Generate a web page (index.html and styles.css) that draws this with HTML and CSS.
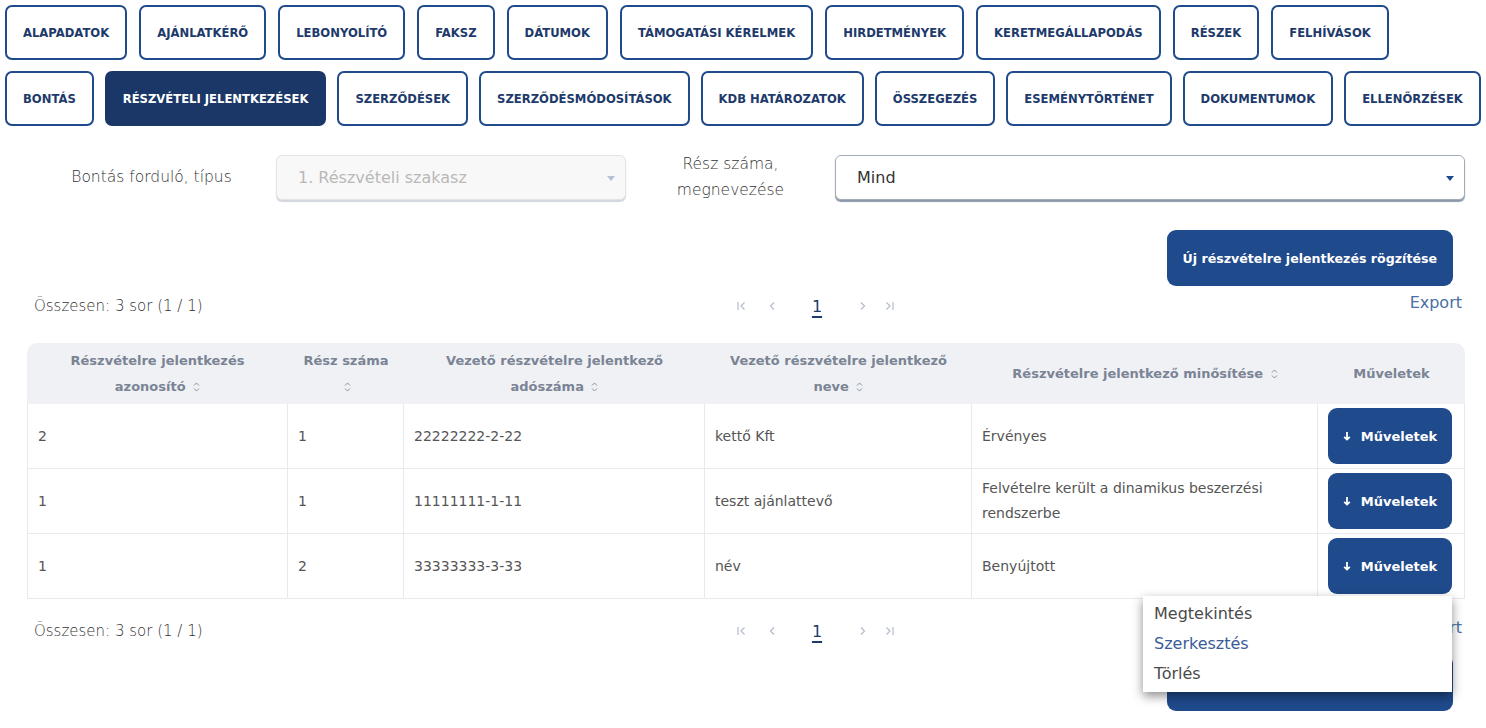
FILE: index.html
```html
<!DOCTYPE html>
<html lang="hu">
<head>
  <meta charset="UTF-8">
  <meta name="viewport" content="width=device-width, initial-scale=1.0">
  <title>Részvételi jelentkezések</title>
  <link rel="stylesheet" href="styles.css">
</head>
<body>
  <nav class="tabs">
    <div class="tab-row">
      <a class="tab" href="#">Alapadatok</a>
      <a class="tab" href="#">Ajánlatkérő</a>
      <a class="tab" href="#">Lebonyolító</a>
      <a class="tab" href="#">Faksz</a>
      <a class="tab" href="#">Dátumok</a>
      <a class="tab" href="#">Támogatási kérelmek</a>
      <a class="tab" href="#">Hirdetmények</a>
      <a class="tab" href="#">Keretmegállapodás</a>
      <a class="tab" href="#">Részek</a>
      <a class="tab" href="#">Felhívások</a>
    </div>
    <div class="tab-row tight">
      <a class="tab" href="#">Bontás</a>
      <a class="tab active" href="#">Részvételi jelentkezések</a>
      <a class="tab" href="#">Szerződések</a>
      <a class="tab" href="#">Szerződésmódosítások</a>
      <a class="tab" href="#">KDB határozatok</a>
      <a class="tab" href="#">Összegezés</a>
      <a class="tab" href="#">Eseménytörténet</a>
      <a class="tab" href="#">Dokumentumok</a>
      <a class="tab" href="#">Ellenőrzések</a>
    </div>
  </nav>

  <main class="content">
    <div class="filters">
      <label class="filter-label">Bontás forduló, típus</label>
      <div class="select disabled">
        <span>1. Részvételi szakasz</span>
        <span class="caret"></span>
      </div>
      <label class="filter-label">Rész száma,<br>megnevezése</label>
      <div class="select">
        <span>Mind</span>
        <span class="caret"></span>
      </div>
    </div>

    <div class="actions">
      <button class="btn-primary">Új részvételre jelentkezés rögzítése</button>
    </div>

    <div class="list-bar">
      <div class="summary">Összesen: 3 sor (1 / 1)</div>
      <div class="pager">
        <span class="pg first"><svg width="9" height="10" viewBox="0 0 9 10"><path d="M1 1v8M7.5 1.5 4 5l3.5 3.5" fill="none" stroke="#b4bccb" stroke-width="1.2"/></svg></span>
        <span class="pg prev"><svg width="9" height="10" viewBox="0 0 9 10"><path d="M6 1.5 2.5 5 6 8.5" fill="none" stroke="#b4bccb" stroke-width="1.2"/></svg></span>
        <span class="pg page">1</span>
        <span class="pg next"><svg width="9" height="10" viewBox="0 0 9 10"><path d="M3 1.5 6.5 5 3 8.5" fill="none" stroke="#b4bccb" stroke-width="1.2"/></svg></span>
        <span class="pg last"><svg width="9" height="10" viewBox="0 0 9 10"><path d="M1.5 1.5 5 5 1.5 8.5M8 1v8" fill="none" stroke="#b4bccb" stroke-width="1.2"/></svg></span>
      </div>
      <a class="export" href="#">Export</a>
    </div>

    <table class="grid">
      <colgroup>
        <col style="width: 261px">
        <col style="width: 116px">
        <col style="width: 301px">
        <col style="width: 267px">
        <col style="width: 346px">
        <col>
      </colgroup>
      <thead>
        <tr>
          <th>Részvételre jelentkezés<br>azonosító <svg class="sort" width="7" height="10" viewBox="0 0 7 10"><path d="M1 3.5 3.5 1 6 3.5M1 6.5 3.5 9 6 6.5" fill="none" stroke="#8a93a1" stroke-width="1"/></svg></th>
          <th>Rész száma<br><svg class="sort" width="7" height="10" viewBox="0 0 7 10"><path d="M1 3.5 3.5 1 6 3.5M1 6.5 3.5 9 6 6.5" fill="none" stroke="#8a93a1" stroke-width="1"/></svg></th>
          <th>Vezető részvételre jelentkező<br>adószáma <svg class="sort" width="7" height="10" viewBox="0 0 7 10"><path d="M1 3.5 3.5 1 6 3.5M1 6.5 3.5 9 6 6.5" fill="none" stroke="#8a93a1" stroke-width="1"/></svg></th>
          <th>Vezető részvételre jelentkező<br>neve <svg class="sort" width="7" height="10" viewBox="0 0 7 10"><path d="M1 3.5 3.5 1 6 3.5M1 6.5 3.5 9 6 6.5" fill="none" stroke="#8a93a1" stroke-width="1"/></svg></th>
          <th>Részvételre jelentkező minősítése <svg class="sort" width="7" height="10" viewBox="0 0 7 10"><path d="M1 3.5 3.5 1 6 3.5M1 6.5 3.5 9 6 6.5" fill="none" stroke="#8a93a1" stroke-width="1"/></svg></th>
          <th>Műveletek</th>
        </tr>
      </thead>
      <tbody>
        <tr>
          <td>2</td>
          <td>1</td>
          <td>22222222-2-22</td>
          <td>kettő Kft</td>
          <td>Érvényes</td>
          <td class="cell-actions">
            <button class="btn-row"><svg width="8" height="10" viewBox="0 0 8 10"><path d="M4 1v7.5M1.2 5.8 4 8.6l2.8-2.8" fill="none" stroke="#fff" stroke-width="1.8"/></svg>Műveletek</button>
          </td>
        </tr>
        <tr>
          <td>1</td>
          <td>1</td>
          <td>11111111-1-11</td>
          <td>teszt ajánlattevő</td>
          <td>Felvételre került a dinamikus beszerzési rendszerbe</td>
          <td class="cell-actions">
            <button class="btn-row"><svg width="8" height="10" viewBox="0 0 8 10"><path d="M4 1v7.5M1.2 5.8 4 8.6l2.8-2.8" fill="none" stroke="#fff" stroke-width="1.8"/></svg>Műveletek</button>
          </td>
        </tr>
        <tr>
          <td>1</td>
          <td>2</td>
          <td>33333333-3-33</td>
          <td>név</td>
          <td>Benyújtott</td>
          <td class="cell-actions">
            <div class="menu-wrap">
              <button class="btn-row"><svg width="8" height="10" viewBox="0 0 8 10"><path d="M4 1v7.5M1.2 5.8 4 8.6l2.8-2.8" fill="none" stroke="#fff" stroke-width="1.8"/></svg>Műveletek</button>
              <ul class="menu">
                <li>Megtekintés</li>
                <li class="hl">Szerkesztés</li>
                <li>Törlés</li>
              </ul>
            </div>
          </td>
        </tr>
      </tbody>
    </table>

    <div class="list-bar bottom">
      <div class="summary">Összesen: 3 sor (1 / 1)</div>
      <div class="pager">
        <span class="pg first"><svg width="9" height="10" viewBox="0 0 9 10"><path d="M1 1v8M7.5 1.5 4 5l3.5 3.5" fill="none" stroke="#b4bccb" stroke-width="1.2"/></svg></span>
        <span class="pg prev"><svg width="9" height="10" viewBox="0 0 9 10"><path d="M6 1.5 2.5 5 6 8.5" fill="none" stroke="#b4bccb" stroke-width="1.2"/></svg></span>
        <span class="pg page">1</span>
        <span class="pg next"><svg width="9" height="10" viewBox="0 0 9 10"><path d="M3 1.5 6.5 5 3 8.5" fill="none" stroke="#b4bccb" stroke-width="1.2"/></svg></span>
        <span class="pg last"><svg width="9" height="10" viewBox="0 0 9 10"><path d="M1.5 1.5 5 5 1.5 8.5M8 1v8" fill="none" stroke="#b4bccb" stroke-width="1.2"/></svg></span>
      </div>
      <a class="export" href="#">Export</a>
    </div>

    <div class="actions after">
      <button class="btn-primary">Új részvételre jelentkezés rögzítése</button>
    </div>
  </main>
</body>
</html>
```

FILE: styles.css
```css
body {
  margin: 0;
  padding: 5px 0 40px;
  background: #fff;
  font-family: 'DejaVu Sans', sans-serif;
  color: #444;
}

.tabs {
  display: flex;
  flex-direction: column;
  gap: 11px;
  padding: 0 5px;
}

.tab-row {
  display: flex;
  gap: 12px;
}

.tab-row.tight {
  gap: 11px;
}

.tab {
  height: 55px;
  box-sizing: border-box;
  display: flex;
  align-items: center;
  padding: 0 16px;
  border: 2px solid #1f4a8b;
  border-radius: 7px;
  color: #1d3a6b;
  font-size: 11.6px;
  font-weight: bold;
  text-transform: uppercase;
  text-decoration: none;
  white-space: nowrap;
}

.tab.active {
  background: #1a3767;
  border-color: #1a3767;
  color: #fff;
}

.content {
  padding: 0 21px 0 27px;
  position: relative;
}

.filters {
  margin-top: 25px;
  display: grid;
  grid-template-columns: 249px 350px 209px 1fr;
  align-items: center;
}

.filter-label {
  text-align: center;
  font-size: 15.5px;
  font-weight: 300;
  line-height: 26px;
  color: #333;
}

.select {
  height: 45px;
  box-sizing: border-box;
  display: flex;
  align-items: center;
  justify-content: space-between;
  padding: 0 10px 0 21px;
  border: 1px solid #a3abb8;
  border-radius: 6px;
  box-shadow: 0 2px 1px #8c98aa;
  font-size: 16px;
  color: #333;
  background: #fff;
}

.select.disabled {
  background: #f8f8f8;
  border-color: #e2e4e8;
  box-shadow: 0 2px 1px #d3d7de;
  color: #b8b8b8;
}

.caret {
  width: 0;
  height: 0;
  border-left: 4px solid transparent;
  border-right: 4px solid transparent;
  border-top: 5px solid #1f4a8b;
  margin-top: 3px;
}

.select.disabled .caret {
  border-top-color: #b5c0d4;
}

.actions {
  margin-top: 27px;
  display: flex;
  justify-content: flex-end;
  padding-right: 12px;
}

.actions.after {
  margin-top: 9px;
}

.btn-primary {
  height: 56px;
  padding: 0 16px;
  border: none;
  border-radius: 9px;
  background: #1f4a8b;
  color: #fff;
  font-family: inherit;
  font-size: 12.6px;
  font-weight: bold;
}

.list-bar {
  margin-top: 5px;
  display: flex;
  height: 30px;
  align-items: center;
}

.list-bar.bottom {
  margin-top: 17px;
}

.summary {
  width: 701px;
  padding-left: 7px;
  font-size: 15px;
  font-weight: 300;
  color: #333;
}

.pager {
  display: flex;
  align-items: center;
}

.pg {
  width: 12px;
  display: flex;
  justify-content: center;
}

.pg.first { margin-right: 19px; }
.pg.prev { margin-right: 33px; }
.pg.page { margin-right: 33px; }
.pg.next { margin-right: 15px; }

.pg.page {
  font-size: 16px;
  color: #1d3a6b;
  text-decoration: underline;
  text-decoration-thickness: 2px;
  text-underline-offset: 4px;
}

.export {
  margin-left: auto;
  align-self: flex-start;
  margin-top: 2px;
  padding-right: 3px;
  font-size: 16px;
  color: #4a6ea4;
  text-decoration: none;
}

.grid {
  margin-top: 22px;
  width: 100%;
  table-layout: fixed;
  border-collapse: separate;
  border-spacing: 0;
  font-size: 14px;
}

.grid th {
  height: 61px;
  padding: 4px 10px;
  box-sizing: border-box;
  background: #eff1f5;
  color: #7b8494;
  font-size: 13px;
  font-weight: bold;
  line-height: 26px;
  text-align: center;
  vertical-align: middle;
}

.grid th:first-child { border-top-left-radius: 10px; }
.grid th:last-child { border-top-right-radius: 10px; }

.sort {
  margin-left: 3px;
  vertical-align: -1px;
}

.grid td {
  height: 65px;
  box-sizing: border-box;
  padding: 4px 10px;
  border-right: 1px solid #e9e9ec;
  border-bottom: 1px solid #e9e9ec;
  line-height: 25px;
  color: #555;
  vertical-align: middle;
}

.grid td:first-child {
  border-left: 1px solid #e9e9ec;
}

.cell-actions {
  text-align: left;
}

.menu-wrap {
  position: relative;
  display: inline-block;
}

.btn-row {
  width: 124px;
  height: 56px;
  display: flex;
  align-items: center;
  justify-content: center;
  gap: 10px;
  border: none;
  border-radius: 9px;
  background: #1f4a8b;
  color: #fff;
  font-family: inherit;
  font-size: 13px;
  font-weight: bold;
}

.menu {
  position: absolute;
  top: calc(100% + 2px);
  right: 0;
  width: 309px;
  margin: 0;
  padding: 3px 0;
  list-style: none;
  background: #fff;
  box-shadow: 0 4px 10px rgba(0, 0, 0, 0.45);
  z-index: 5;
}

.menu li {
  padding: 0 11px;
  line-height: 30px;
  font-size: 16px;
  color: #4a4a4a;
}

.menu li.hl {
  color: #3c5c98;
}
```
